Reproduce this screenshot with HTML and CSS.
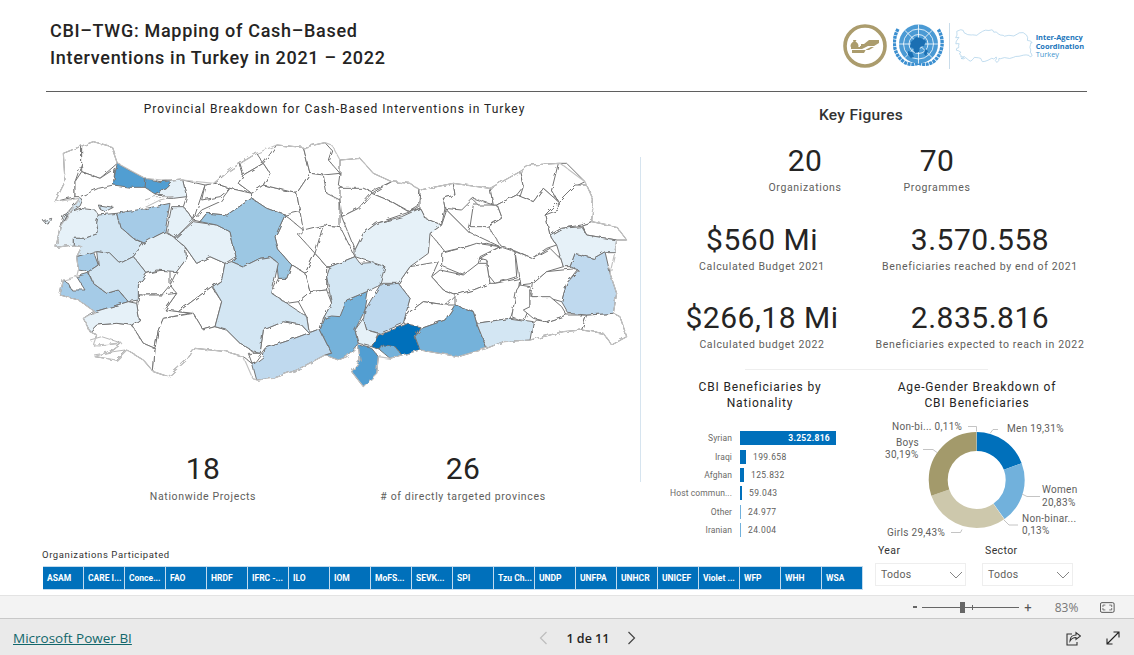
FILE: index.html
```html
<!DOCTYPE html>
<html lang="en">
<head>
  <meta charset="UTF-8">
  <title>CBI-TWG: Mapping of Cash-Based Interventions in Turkey</title>
  <link rel="stylesheet" href="styles.css">
</head>
<body>
  <main class="report">
    <header class="report-header">
      <h1 class="report-title">CBI–TWG: Mapping of Cash–Based<br>Interventions in Turkey in 2021 – 2022</h1>
      <div class="logos">
        <svg class="logo-cash" viewBox="842 24 46 46" width="46" height="46">
          <circle cx="865" cy="47" r="20" fill="none" stroke="#ab9c6d" stroke-width="3.6"/>
          <path d="M853 41h3.500l-1 1.500c2 1 3 3 3 4.500 0 1-1 1.500-2.500 1.500h-3c-1.500 0-2.500-.5-2.500-1.500 0-1.500 1-3.500 3-4.500z" fill="#ab9c6d"/>
          <path d="M851 50h11l6-3h6l5-3v-3h-10l-5 4h-3v2h-1v1h-9zM852 51h17l5-3h-3l-5 2.500-2 3.500h-12z" fill="#ab9c6d"/>
        </svg>
        <svg class="logo-un" viewBox="893 22 51 50" width="51" height="50">
          <path d="M898 30c-6 11-5 25 6 33 5 3 10 3 14 1 5 2 10 2 15-1 10-8 12-22 5-33" fill="none" stroke="#3b8fd0" stroke-width="3.400" stroke-dasharray="3 .7"/>
          <circle cx="918.500" cy="45" r="19.500" fill="#4a9ad4"/>
          <g fill="none" stroke="#fff" stroke-width=".8">
            <circle cx="918.500" cy="45" r="15"/>
            <circle cx="918.500" cy="45" r="9.500"/>
            <circle cx="918.500" cy="45" r="4.500"/>
            <path d="M918.500 25.500v39M899 45h39M904.700 31.200l27.600 27.600M932.300 31.200l-27.600 27.600"/>
          </g>
          <path d="M911 43l5-5 5 1 5 3-2 5-4 1-1 5-4 1-2-5-3-1zM908 52l4 1 2 5-3 1-3-3zM925 50l3 2-2 5-2-2z" fill="#1b6fb2"/>
        </svg>
        <span class="logo-divider"></span>
        <svg class="logo-turkey" viewBox="60 20 1750 760" width="78" height="34">
          <use href="#coast"/>
        </svg>
        <p class="logo-text"><b>Inter-Agency<br>Coordination</b><br>Turkey</p>
      </div>
    </header>

    <section class="report-body">
      <div class="left-col">
        <h2 class="map-title">Provincial Breakdown for Cash-Based Interventions in Turkey</h2>
        <svg class="map" viewBox="0 0 1830 810" width="610" height="270">
          <defs>
            <filter id="rough" x="-2%" y="-2%" width="104%" height="104%">
              <feTurbulence type="fractalNoise" baseFrequency="0.05" numOctaves="2" seed="4" result="noise"/>
              <feDisplacementMap in="SourceGraphic" in2="noise" scale="12"/>
              <feGaussianBlur stdDeviation="0.7"/>
            </filter>
          </defs>
          <g class="map-shapes">
          <g class="west">
            <!-- thrace -->
            <polygon class="m0" points="100,70 155,48 155,100 135,155 135,200 75,215 105,155"/>
            <polygon class="m0" points="155,48 190,35 245,50 262,100 210,145 155,125"/>
            <polygon class="m0" points="135,155 155,125 210,145 255,115 250,165 205,175 150,200 135,200"/>
            <!-- black sea side -->
            <polygon class="m0" points="458,150 525,165 510,210 490,270 460,230 470,200"/>
            <polygon class="m0" points="525,165 555,160 600,175 570,200 515,210"/>
            <polygon class="m0" points="555,160 600,120 630,100 640,135 625,160 665,190 600,175"/>
            <polygon class="m0" points="630,100 680,70 700,100 640,135"/>
            <polygon class="m0" points="640,135 700,100 720,130 700,165 665,190 625,160"/>
            <polygon class="m0" points="490,270 515,240 570,215 600,175 665,190 665,205 590,255 530,250 510,275"/>
            <polygon class="m0" points="665,190 700,165 800,190 810,245 765,255 710,235 665,205"/>
            <polygon class="m0" points="700,100 740,45 820,52 840,130 800,190 700,165 720,130"/>
            <polygon class="m0" points="820,52 885,38 905,60 895,90 930,130 880,135 840,130"/>
            <polygon class="m0" points="800,190 840,130 880,135 890,190 930,210 930,290 880,285 820,300 810,245"/>
            <polygon class="m0" points="765,255 820,300 805,315 855,370 825,430 785,405 745,360 735,320"/>
            <polygon class="m0" points="745,445 770,445 785,405 825,430 840,485 805,515 770,520 725,490"/>
            <polygon class="m0" points="825,430 855,370 890,410 890,480 840,485"/>
            <polygon class="m0" points="805,515 840,485 890,480 905,520 880,565 870,600 838,610 830,560"/>
            <polygon class="m0" points="855,370 880,285 930,290 975,380 900,410 890,410"/>
            <!-- aegean and med -->
            <polygon class="m0" points="465,350 500,400 540,380 585,400 575,450 545,470 445,545 405,540 440,490 420,465 440,425 470,385"/>
            <polygon class="m0" points="325,465 350,430 420,415 420,465 395,495 325,495"/>
            <polygon class="m0" points="320,520 325,495 395,495 440,490 405,540 445,545 480,550 400,565 385,600 375,655 340,640 305,585 328,570"/>
            <polygon class="m0" points="445,545 545,470 575,515 555,590 520,600 490,550"/>
            <polygon class="m0" points="400,565 490,550 520,600 555,590 590,600 630,640 670,665 665,700 640,680 590,665 495,655 470,690 415,740 370,725 375,655 385,600"/>
            <polygon class="m0" points="180,605 200,585 260,580 305,585 340,640 375,655 370,725 340,690 290,660 260,690 195,680 250,660 275,640 190,645 200,615"/>
            <polygon class="m0" points="690,670 700,600 760,575 815,585 838,610 860,600 780,630 705,655 668,705 655,670"/>
            <!-- shaded west -->
            <polygon class="m7" points="262,100 300,122 345,145 348,172 300,172 250,165 255,130"/>
            <polygon class="m7" points="348,145 390,155 425,153 408,172 375,192 345,172"/>
            <polygon class="m1" points="425,153 458,150 470,200 430,205 390,205 405,195 375,192 408,172"/>
            <polygon class="m1" points="78,352 90,290 100,255 150,235 195,240 205,255 200,280 205,310 165,325 130,325 130,345"/>
            <polygon class="m2" points="90,290 110,250 150,205 158,210 150,228 110,255"/>
            <polygon class="m2" points="130,345 130,325 165,325 205,310 200,280 205,255 260,250 270,290 310,325 340,340 310,380 270,400 240,370 200,365 140,380 155,350"/>
            <polygon class="m4" points="260,250 350,235 420,220 405,305 375,320 345,340 310,325 270,290"/>
            <polygon class="m1" points="425,230 460,230 490,270 435,325 410,305"/>
            <polygon class="m1" points="340,340 375,320 405,305 435,325 465,350 470,385 440,425 380,420 350,430 310,380"/>
            <polygon class="m1" points="435,325 490,275 560,285 600,305 618,380 585,400 540,380 500,400 465,350"/>
            <polygon class="m5" points="510,275 530,250 590,255 665,205 710,235 765,255 735,320 745,360 785,405 770,445 745,445 740,395 720,380 690,385 640,410 605,395 618,380 600,305 560,285"/>
            <polygon class="m2" points="585,400 605,395 640,410 690,385 720,380 745,400 725,490 770,520 830,560 838,610 815,585 760,575 700,600 690,670 670,665 630,640 590,600 555,590 575,515 548,470 575,450"/>
            <polygon class="m4" points="140,380 190,365 205,405 175,425 145,420"/>
            <polygon class="m4" points="100,450 115,460 125,480 165,480 140,440 175,430 190,460 230,490 265,480 295,515 195,545 145,510 90,495"/>
            <polygon class="m2" points="175,425 205,405 200,365 240,370 270,400 310,380 350,430 325,465 325,510 295,515 265,480 230,490 190,460"/>
            <polygon class="m1" points="195,545 295,515 320,520 328,570 305,585 260,580 200,585 180,605 160,565 190,545"/>
            <polygon class="m3" points="668,705 700,680 705,655 780,630 860,600 870,600 905,670 885,675 800,720 730,745 680,750"/>
            <polygon class="m6" points="870,600 885,565 950,510 1015,483 1005,540 975,600 985,640 950,680 925,690 885,675 905,670"/>
            <polygon class="m2" points="890,440 900,410 975,380 990,400 1070,395 1070,420 1050,465 1015,483 950,510 930,560 905,558 880,565 905,520"/>
            <!-- marmara and islands -->
            <polygon class="m2" points="205,225 250,232 225,245 210,238"/>
            <polygon class="m1" points="40,272 65,265 62,275 45,280"/>
            <polyline class="isle" points="340,235 390,210 430,200 375,200 340,212"/>
            <polyline class="isle" points="180,630 215,620 270,638 195,650"/>
            <polyline class="isle" points="192,675 250,665 285,660 255,690"/>
          </g>
          <g class="east" transform="translate(900 0)">
            <polygon class="m0" points="30,90 90,85 130,130 185,155 120,185 100,175 55,185 25,165 30,130"/>
            <polygon class="m0" points="185,155 240,160 270,180 265,230 240,245 185,215 125,190"/>
            <polygon class="m0" points="30,175 100,175 125,185 120,225 85,235 35,260 30,210"/>
            <polygon class="m0" points="35,260 85,235 125,190 185,215 235,245 270,235 140,280 100,310 75,360"/>
            <polygon class="m0" points="270,180 370,160 375,195 340,205 345,235 335,285 285,265 270,235"/>
            <polygon class="m0" points="335,285 350,240 415,305 510,350 470,340 430,345 345,365 300,310"/>
            <polygon class="m0" points="345,235 395,200 430,210 445,225 420,290 415,305 350,240"/>
            <polygon class="m0" points="430,225 500,225 515,265 470,290 420,290"/>
            <polygon class="m0" points="370,160 480,175 490,225 430,205 395,240 345,235 340,205 375,195"/>
            <polygon class="m0" points="480,175 570,125 580,170 560,195 500,225 490,225"/>
            <polygon class="m0" points="570,125 600,105 685,100 690,120 665,180 685,215 640,175 610,215 570,200 580,170"/>
            <polygon class="m0" points="685,100 710,100 765,155 735,170 685,215 665,180"/>
            <polygon class="m0" points="685,215 735,165 770,165 790,210 785,275 755,285 695,295 660,315 645,255 685,240"/>
            <polygon class="m0" points="500,225 560,195 610,215 640,175 685,215 645,255 660,315 680,345 650,355 605,385 560,365 510,345 475,290 515,265"/>
            <polygon class="m0" points="755,285 785,275 860,290 890,330 860,330 770,315"/>
            <polygon class="m0" points="335,415 335,370 410,350 440,340 510,350 450,380 445,400 440,425 400,435 340,410"/>
            <polygon class="m0" points="510,350 555,365 560,440 495,460 475,435 470,390 450,385"/>
            <polygon class="m0" points="555,365 605,385 660,355 695,390 700,410 650,425 610,460 570,465"/>
            <polygon class="m0" points="610,460 650,425 745,415 710,460 695,515 660,505 605,500"/>
            <polygon class="m0" points="305,440 330,420 400,435 445,400 470,400 480,460 430,480 380,495 340,480"/>
            <polygon class="m0" points="205,460 240,410 325,395 305,440 340,480 380,495 350,525 280,515 240,545 220,570 240,505"/>
            <polygon class="m0" points="220,575 240,545 280,515 350,525 375,525 345,570 275,595 225,582"/>
            <polygon class="m0" points="375,495 430,480 480,460 495,460 570,445 565,480 545,555 540,565 440,580 430,545 375,525"/>
            <polygon class="m0" points="570,465 600,470 600,530 580,575 545,560 560,480"/>
            <polygon class="m0" points="600,480 605,500 660,500 695,530 710,555 650,575 610,565 580,540 600,530"/>
            <polygon class="m0" points="600,630 590,600 620,570 650,575 710,555 770,555 755,600 700,605"/>
            <polygon class="m0" points="770,555 850,550 870,560 890,620 845,645 820,610 755,600"/>
            <!-- shaded east -->
            <polygon class="m1" points="75,360 100,310 140,280 215,260 270,235 285,265 335,285 300,310 295,370 240,410 205,460 150,460 165,410 75,380"/>
            <polygon class="m3" points="105,540 150,465 205,460 240,505 220,580 150,610 110,600 100,570"/>
            <polygon class="m1" points="75,600 100,565 110,600 145,610 125,650 85,640"/>
            <polygon class="m8" points="125,650 145,615 175,605 230,582 270,590 255,620 270,660 215,675 195,650 160,650 150,660"/>
            <polygon class="m6" points="150,660 160,645 195,650 215,675 180,685"/>
            <polygon class="m7" points="85,645 125,655 145,680 140,730 100,770 65,725 90,690"/>
            <polygon class="m6" points="255,620 275,595 345,570 375,525 430,545 440,580 470,655 385,680 270,660"/>
            <polygon class="m2" points="440,580 540,565 610,575 600,630 520,635 470,655"/>
            <polygon class="m3" points="695,515 710,460 745,420 720,410 735,370 790,385 825,365 840,430 860,490 850,550 770,555 715,550"/>
            <polygon class="m1" points="660,315 695,295 755,290 770,315 860,330 855,365 825,365 790,385 735,370 720,410 700,410 680,345"/>
          </g>
          <polyline id="coast" class="coast" points="75,215 105,155 100,70 155,48 190,35 245,50 262,100 345,145 425,153 458,150 550,160 600,120 680,70 740,45 820,52 885,38 905,45 930,90 990,85 1030,130 1085,155 1140,160 1170,180 1270,160 1380,175 1470,125 1500,105 1590,100 1665,155 1690,210 1685,275 1760,290 1790,330 1760,330 1755,365 1740,430 1760,490 1750,550 1770,560 1790,620 1745,645 1720,610 1655,600 1600,605 1500,630 1420,635 1370,655 1285,680 1170,660 1115,675 1080,685 1045,680 1040,730 1000,770 965,725 990,690 985,645 950,680 925,690 885,675 800,720 730,745 680,750 668,745 640,680 590,665 495,655 470,690 415,740 370,725 340,690 290,660 260,690 195,680 250,660 275,640 190,645 200,615 180,605 160,565 195,545 145,510 90,495 100,450 140,440 145,420 140,380 155,350 130,345 78,352 90,290 150,205 75,215"/>
          </g>
        </svg>
        <div class="map-cards">
          <div class="kpi">
            <div class="kpi-value">18</div>
            <div class="kpi-label">Nationwide Projects</div>
          </div>
          <div class="kpi">
            <div class="kpi-value">26</div>
            <div class="kpi-label"># of directly targeted provinces</div>
          </div>
        </div>
      </div>

      <span class="col-divider"></span>

      <div class="right-col">
        <h2 class="figures-title">Key Figures</h2>
        <div class="kpi-row kpi-row-first">
          <div class="kpi">
            <div class="kpi-value">20</div>
            <div class="kpi-label">Organizations</div>
          </div>
          <div class="kpi">
            <div class="kpi-value">70</div>
            <div class="kpi-label">Programmes</div>
          </div>
        </div>
        <div class="kpi-row">
          <div class="kpi">
            <div class="kpi-value">$560 Mi</div>
            <div class="kpi-label">Calculated Budget 2021</div>
          </div>
          <div class="kpi">
            <div class="kpi-value">3.570.558</div>
            <div class="kpi-label">Beneficiaries reached by end of 2021</div>
          </div>
        </div>
        <div class="kpi-row">
          <div class="kpi">
            <div class="kpi-value">$266,18 Mi</div>
            <div class="kpi-label">Calculated budget 2022</div>
          </div>
          <div class="kpi">
            <div class="kpi-value">2.835.816</div>
            <div class="kpi-label">Beneficiaries expected to reach in 2022</div>
          </div>
        </div>
        <div class="figures-rule"></div>

        <div class="charts">
          <div class="chart-nationality">
            <h3 class="chart-title">CBI Beneficiaries by<br>Nationality</h3>
            <div class="bars">
              <div class="bar-row">
                <span class="bar-label">Syrian</span>
                <span class="bar bar-main" style="width: 96px"><span class="bar-value-in">3.252.816</span></span>
              </div>
              <div class="bar-row">
                <span class="bar-label">Iraqi</span>
                <span class="bar" style="width: 6px"></span>
                <span class="bar-value">199.658</span>
              </div>
              <div class="bar-row">
                <span class="bar-label">Afghan</span>
                <span class="bar" style="width: 4px"></span>
                <span class="bar-value">125.832</span>
              </div>
              <div class="bar-row">
                <span class="bar-label">Host commun...</span>
                <span class="bar" style="width: 2px"></span>
                <span class="bar-value">59.043</span>
              </div>
              <div class="bar-row">
                <span class="bar-label">Other</span>
                <span class="bar bar-thin" style="width: 1px"></span>
                <span class="bar-value">24.977</span>
              </div>
              <div class="bar-row">
                <span class="bar-label">Iranian</span>
                <span class="bar bar-thin" style="width: 1px"></span>
                <span class="bar-value">24.004</span>
              </div>
            </div>
          </div>
          <div class="chart-gender">
            <h3 class="chart-title">Age-Gender Breakdown of<br>CBI Beneficiaries</h3>
            <svg class="donut" viewBox="870 415 230 130" width="230" height="130">
              <g fill="none" stroke-width="19" transform="rotate(-90 976.700 480)">
                <circle cx="976.700" cy="480" r="38.500" pathLength="100" stroke="#0070bb" stroke-dasharray="19.310 80.690"/>
                <circle cx="976.700" cy="480" r="38.500" pathLength="100" stroke="#71b1dc" stroke-dasharray="20.830 79.170" stroke-dashoffset="-19.310"/>
                <circle cx="976.700" cy="480" r="38.500" pathLength="100" stroke="#cdc8ac" stroke-dasharray="29.430 70.570" stroke-dashoffset="-40.270"/>
                <circle cx="976.700" cy="480" r="38.500" pathLength="100" stroke="#a39a6b" stroke-dasharray="30.190 69.810" stroke-dashoffset="-69.700"/>
              </g>
              <g fill="none" stroke="#b5b5b5" stroke-width=".8">
                <path d="M968 426.500h8.500v5"/>
                <path d="M990 433.500l3-4h5"/>
                <path d="M923 449.500h10l4 3"/>
                <path d="M1040 496.500h-13l-5-2.500"/>
                <path d="M1018 525h-9l-5-5"/>
                <path d="M951 532.500h9.500l1.500-3"/>
              </g>
              <g class="donut-labels">
                <text x="892" y="430">Non-bi... 0,11%</text>
                <text x="1007" y="432">Men 19,31%</text>
                <text x="896" y="446">Boys</text>
                <text x="885" y="458">30,19%</text>
                <text x="1042" y="493">Women</text>
                <text x="1042" y="506">20,83%</text>
                <text x="1022" y="522">Non-binar...</text>
                <text x="1022" y="534">0,13%</text>
                <text x="887" y="536">Girls 29,43%</text>
              </g>
            </svg>
          </div>
        </div>
      </div>
    </section>

    <section class="report-bottom">
      <div class="orgs">
        <div class="orgs-title">Organizations Participated</div>
        <div class="org-tiles">
          <span class="org-tile">ASAM</span>
          <span class="org-tile">CARE I...</span>
          <span class="org-tile">Conce...</span>
          <span class="org-tile">FAO</span>
          <span class="org-tile">HRDF</span>
          <span class="org-tile">IFRC -...</span>
          <span class="org-tile">ILO</span>
          <span class="org-tile">IOM</span>
          <span class="org-tile">MoFS...</span>
          <span class="org-tile">SEVK...</span>
          <span class="org-tile">SPI</span>
          <span class="org-tile">Tzu Ch...</span>
          <span class="org-tile">UNDP</span>
          <span class="org-tile">UNFPA</span>
          <span class="org-tile">UNHCR</span>
          <span class="org-tile">UNICEF</span>
          <span class="org-tile">Violet ...</span>
          <span class="org-tile">WFP</span>
          <span class="org-tile">WHH</span>
          <span class="org-tile">WSA</span>
        </div>
      </div>
      <div class="filters">
        <div class="filter">
          <div class="filter-label">Year</div>
          <div class="filter-box">
            <span>Todos</span>
            <svg width="14" height="8" viewBox="0 0 14 8"><path d="M1 1l6 6 6-6" fill="none" stroke="#777" stroke-width=".9"/></svg>
          </div>
        </div>
        <div class="filter">
          <div class="filter-label">Sector</div>
          <div class="filter-box">
            <span>Todos</span>
            <svg width="14" height="8" viewBox="0 0 14 8"><path d="M1 1l6 6 6-6" fill="none" stroke="#777" stroke-width=".9"/></svg>
          </div>
        </div>
      </div>
    </section>
  </main>

  <div class="zoom-bar">
    <span class="zoom-minus"></span>
    <span class="zoom-track"><span class="zoom-tick"></span><span class="zoom-thumb"></span></span>
    <span class="zoom-plus">+</span>
    <span class="zoom-value">83%</span>
    <svg class="zoom-fit" width="15" height="11" viewBox="0 0 15 11">
      <rect x=".5" y=".5" width="14" height="10" rx="1.500" fill="none" stroke="#555"/>
      <path d="M3 5V3h2.500M12 6v2H9.500M9.500 3H12v2M5.500 8H3V6" fill="none" stroke="#555" stroke-width=".8"/>
    </svg>
  </div>

  <footer class="pbi-footer">
    <a class="pbi-link" href="#">Microsoft Power BI</a>
    <nav class="pager">
      <svg width="9" height="14" viewBox="0 0 9 14"><path d="M7.500 1l-6 6 6 6" fill="none" stroke="#bdbdbd" stroke-width="1.200"/></svg>
      <span class="pager-text">1 de 11</span>
      <svg width="9" height="14" viewBox="0 0 9 14"><path d="M1.500 1l6 6-6 6" fill="none" stroke="#444" stroke-width="1.200"/></svg>
    </nav>
    <div class="footer-icons">
      <svg width="15" height="15" viewBox="0 0 15 15">
        <path d="M6 3H1v11h10v-3" fill="none" stroke="#333" stroke-width="1.100"/>
        <path d="M4 10c0-4 3-6 6-6V1.500L14.500 5 10 8.500V6.500c-3 0-4.500 1-6 3.500z" fill="none" stroke="#333" stroke-width="1.100"/>
      </svg>
      <svg width="14" height="14" viewBox="0 0 14 14">
        <path d="M1 13L13 1M7.500 1H13v5.500M1 7.500V13h5.500" fill="none" stroke="#222" stroke-width="1.100"/>
      </svg>
    </div>
  </footer>
</body>
</html>
```

FILE: styles.css
```css
* {
  margin: 0;
  padding: 0;
  box-sizing: border-box;
}

html,
body {
  width: 1134px;
  height: 655px;
  overflow: hidden;
}

body {
  font-family: Roboto, "Liberation Sans", sans-serif;
  background-color: #ffffff;
  color: #252423;
}

/* Report canvas */
.report {
  height: 595px;
  padding: 0 47px 0 46px;
  overflow: hidden;
}

.report-header {
  height: 92px;
  display: flex;
  justify-content: space-between;
  border-bottom: 1px solid #5f5f5f;
}

.report-title {
  margin: 17px 0 0 4px;
  font-size: 18px;
  line-height: 27px;
  font-weight: 500;
  letter-spacing: 0.700px;
  color: #252423;
}

.logos {
  display: flex;
  align-items: center;
  height: 92px;
  padding: 0 3px 0 0;
}

.logo-cash {
  margin-right: 5px;
}

.logo-divider {
  width: 1px;
  height: 46px;
  margin: 0 5px;
  background-color: #c9dcea;
}

.logo-turkey {
  --coast: #a9cfe9;
  --coast-width: 16;
  margin-right: 3px;
}

.logo-text {
  font-family: "Open Sans", sans-serif;
  font-size: 7.400px;
  line-height: 8.500px;
  color: #3f96d0;
}

.logo-text b {
  color: #1b75bb;
}

/* Body columns */
.report-body {
  height: 453px;
  display: flex;
}

.left-col {
  width: 594px;
}

.map-title {
  margin-top: 9px;
  text-align: center;
  width: 577px;
  font-size: 12px;
  line-height: 16px;
  font-weight: 400;
  letter-spacing: 1px;
  color: #252423;
}

.map {
  display: block;
  margin: 13px 0 0 -16px;
}

.map-shapes {
  filter: url(#rough);
}

.map polygon {
  stroke: #747474;
  stroke-width: 3;
  stroke-linejoin: round;
}

.isle {
  fill: #ffffff;
  stroke: #a8a8a8;
  stroke-width: 2.500;
}

.coast {
  fill: none;
  stroke: var(--coast, #c2c2c2);
  stroke-width: var(--coast-width, 3.500);
  stroke-linejoin: round;
}

.m0 { fill: #ffffff; }
.m1 { fill: #e6f1f8; }
.m2 { fill: #d3e6f3; }
.m3 { fill: #bfd9ee; }
.m4 { fill: #a5cbe7; }
.m5 { fill: #9cc7e3; }
.m6 { fill: #74b2da; }
.m7 { fill: #519ed2; }
.m8 { fill: #0070bb; }

.map-cards {
  margin-top: 51px;
  display: grid;
  grid-template-columns: 314px 206px;
}

.kpi {
  text-align: center;
  white-space: nowrap;
}

.kpi-value {
  font-size: 30px;
  line-height: 36px;
  font-weight: 400;
  letter-spacing: 0.500px;
  color: #252423;
}

.kpi-label {
  margin-top: 1px;
  font-size: 10.500px;
  line-height: 16px;
  letter-spacing: 0.650px;
  color: #605e5c;
}

.map-cards .kpi-label {
  margin-top: 2px;
}

.col-divider {
  width: 1px;
  height: 325px;
  margin-top: 65px;
  background-color: #d6e4ef;
}

.right-col {
  width: 446px;
}

.figures-title {
  margin: 13px 0 0 0;
  text-align: center;
  width: 440px;
  font-size: 15.500px;
  line-height: 20px;
  font-weight: 500;
  letter-spacing: 0.300px;
  color: #333333;
}

.kpi-row {
  margin: 26px 0 0 12px;
  display: grid;
  grid-template-columns: 218px 218px;
}

.kpi-row-first {
  margin: 18px 0 0 98px;
  grid-template-columns: 132px 132px;
}

.kpi-row + .kpi-row + .kpi-row {
  margin-top: 25px;
}

.figures-rule {
  width: 243px;
  height: 1px;
  margin: 16px 0 0 104px;
  background-color: #eeeeee;
}

/* Charts */
.charts {
  display: flex;
}

.chart-title {
  font-size: 12px;
  line-height: 16px;
  font-weight: 400;
  letter-spacing: 0.850px;
  text-align: center;
  color: #252423;
}

.chart-nationality {
  width: 229px;
  padding-top: 9px;
}

.chart-nationality .chart-title {
  width: 238px;
}

.bars {
  margin-top: 18px;
}

.bar-row {
  height: 18.400px;
  display: flex;
  align-items: center;
}

.bar-label {
  width: 91px;
  margin-right: 8px;
  text-align: right;
  font-size: 8.500px;
  letter-spacing: 0.100px;
  color: #6b6a68;
}

.bar {
  height: 14px;
  background-color: #0070bb;
  display: flex;
  align-items: center;
  justify-content: flex-end;
}

.bar-thin {
  background-color: #71b1dc;
}

.bar-value-in {
  padding-right: 6px;
  font-size: 8.500px;
  font-weight: 700;
  letter-spacing: 0.300px;
  color: #ffffff;
  white-space: nowrap;
}

.bar-value {
  margin-left: 7px;
  font-size: 8.500px;
  letter-spacing: 0.400px;
  color: #605e5c;
}

.chart-gender {
  width: 230px;
  padding-top: 9px;
}

.chart-gender .chart-title {
  width: 214px;
}

.donut {
  display: block;
  margin-top: 4px;
}

.donut-labels text {
  font-size: 10px;
  letter-spacing: 0.300px;
  fill: #605e5c;
}

/* Bottom strip */
.report-bottom {
  display: flex;
  margin-left: -4px;
}

.orgs {
  width: 821px;
  padding-top: 3px;
}

.orgs-title {
  font-size: 9.500px;
  line-height: 14px;
  letter-spacing: 0.600px;
  color: #333333;
}

.org-tiles {
  margin: 4px 0 0 1px;
  display: flex;
}

.org-tile {
  width: 41px;
  height: 24px;
  padding-left: 4px;
  border: 1px solid #c2dbee;
  border-left-width: 0;
  background-color: #0070bb;
  color: #ffffff;
  font-size: 8.500px;
  font-weight: 700;
  line-height: 22px;
  white-space: nowrap;
  overflow: hidden;
}

.filters {
  margin-left: 12px;
  display: flex;
  gap: 16px;
}

.filter {
  width: 91px;
}

.filter-label {
  margin: -1px 0 0 3px;
  font-size: 10.500px;
  line-height: 14px;
  letter-spacing: 0.400px;
  color: #333333;
}

.filter-box {
  height: 23px;
  margin-top: 5px;
  padding: 0 2px 0 5px;
  border: 1px solid #eeeeee;
  display: flex;
  align-items: center;
  justify-content: space-between;
  font-size: 10.500px;
  letter-spacing: 0.300px;
  color: #605e5c;
}

/* Viewer chrome */
.zoom-bar {
  height: 24px;
  padding: 0 19px 0 913px;
  display: flex;
  align-items: center;
  background-color: #f3f3f3;
  border-top: 1px solid #e3e3e3;
  border-bottom: 1px solid #c8c8c8;
}

.zoom-minus {
  width: 4px;
  height: 2px;
  background-color: #666666;
}

.zoom-track {
  width: 100px;
  height: 1px;
  margin: 0 5px;
  background-color: #666666;
  display: flex;
  align-items: center;
}

.zoom-thumb {
  width: 5px;
  height: 11px;
  background-color: #666666;
  margin-left: -13px;
}

.zoom-tick {
  width: 1px;
  height: 5px;
  margin-left: 50px;
  background-color: #666666;
}

.zoom-plus {
  font-size: 13px;
  color: #555555;
}

.zoom-value {
  margin-left: 23px;
  font-family: "Open Sans", sans-serif;
  font-size: 12px;
  color: #777777;
}

.zoom-fit {
  margin-left: 22px;
}

.pbi-footer {
  height: 36px;
  padding: 2px 14px 0 13px;
  display: flex;
  align-items: center;
  justify-content: space-between;
  background-color: #eaeaea;
}

.pbi-link {
  font-family: "Open Sans", sans-serif;
  font-size: 13.500px;
  color: #12676b;
}

.pager {
  display: flex;
  align-items: center;
  gap: 18px;
  margin-right: 22px;
}

.pager-text {
  font-family: "Open Sans", sans-serif;
  font-size: 12.500px;
  font-weight: 600;
  color: #252423;
}

.footer-icons {
  display: flex;
  align-items: center;
  gap: 25px;
}
```
